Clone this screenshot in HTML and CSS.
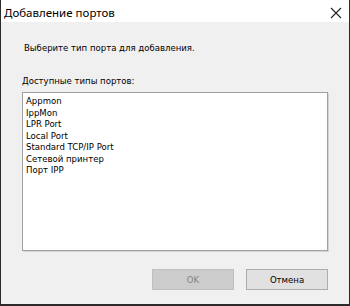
FILE: index.html
```html
<!DOCTYPE html>
<html lang="ru">
<head>
  <meta charset="UTF-8">
  <title>Добавление портов</title>
  <link rel="stylesheet" href="styles.css">
</head>
<body>
  <div class="dialog">
    <header class="title-bar">
      <span class="title">Добавление портов</span>
      <span class="close-btn">
        <svg width="12" height="12" viewBox="0 0 12 12">
          <path d="M1 1 L11 11 M11 1 L1 11" stroke="#202020" stroke-width="1.1" fill="none"/>
        </svg>
      </span>
    </header>

    <div class="dialog-body">
      <p class="prompt">Выберите тип порта для добавления.</p>
      <p class="list-label">Доступные типы портов:</p>

      <ul class="port-list">
        <li>Appmon</li>
        <li>IppMon</li>
        <li>LPR Port</li>
        <li>Local Port</li>
        <li>Standard TCP/IP Port</li>
        <li>Сетевой принтер</li>
        <li>Порт IPP</li>
      </ul>

      <div class="buttons">
        <button class="btn" disabled>OK</button>
        <button class="btn">Отмена</button>
      </div>
    </div>
  </div>
</body>
</html>
```

FILE: styles.css
```css
* {
  box-sizing: border-box;
  margin: 0;
  padding: 0;
}

body {
  font-family: 'DejaVu Sans Condensed', 'DejaVu Sans', sans-serif;
  background: #f0f0f0;
  width: 350px;
  height: 306px;
  overflow: hidden;
}

.dialog {
  width: 350px;
  height: 306px;
  border: 1px solid #2b2b2b;
  border-top: none;
  border-bottom-width: 2px;
  background: #f0f0f0;
  display: flex;
  flex-direction: column;
}

.title-bar {
  height: 22px;
  background: #fff;
  display: flex;
  align-items: center;
  justify-content: space-between;
  padding: 0 7px 0 3px;
  flex-shrink: 0;
}

.title {
  font-family: 'Noto Sans', sans-serif;
  font-size: 11.5px;
  color: #000;
  padding-top: 3px;
}

.close-btn {
  display: flex;
  padding-top: 3px;
}

.dialog-body {
  flex: 1;
  padding: 20px 21px 0 21px;
  font-size: 9.5px;
  color: #000;
}

.prompt {
  margin-left: 2px;
  height: 12px;
  line-height: 12px;
}

.list-label {
  margin-top: 21px;
  height: 12px;
  line-height: 12px;
}

.port-list {
  list-style: none;
  margin-top: 5px;
  height: 159px;
  background: #fff;
  border: 1px solid #a0a0a0;
  box-shadow: 1px 1px 0 #d4d4d4;
  padding: 2px 3px;
  width: 306px;
}

.port-list li {
  height: 11.5px;
  line-height: 11.5px;
  white-space: nowrap;
}

.buttons {
  display: flex;
  justify-content: flex-end;
  gap: 12px;
  margin-top: 18px;
  width: 306px;
}

.btn {
  width: 82px;
  height: 21px;
  font-family: 'DejaVu Sans Condensed', 'DejaVu Sans', sans-serif;
  font-size: 9.5px;
  background: #e1e1e1;
  border: 1px solid #adadad;
  color: #000;
}

.btn:disabled {
  background: #cccccc;
  border-color: #bfbfbf;
  color: #838383;
}
```
